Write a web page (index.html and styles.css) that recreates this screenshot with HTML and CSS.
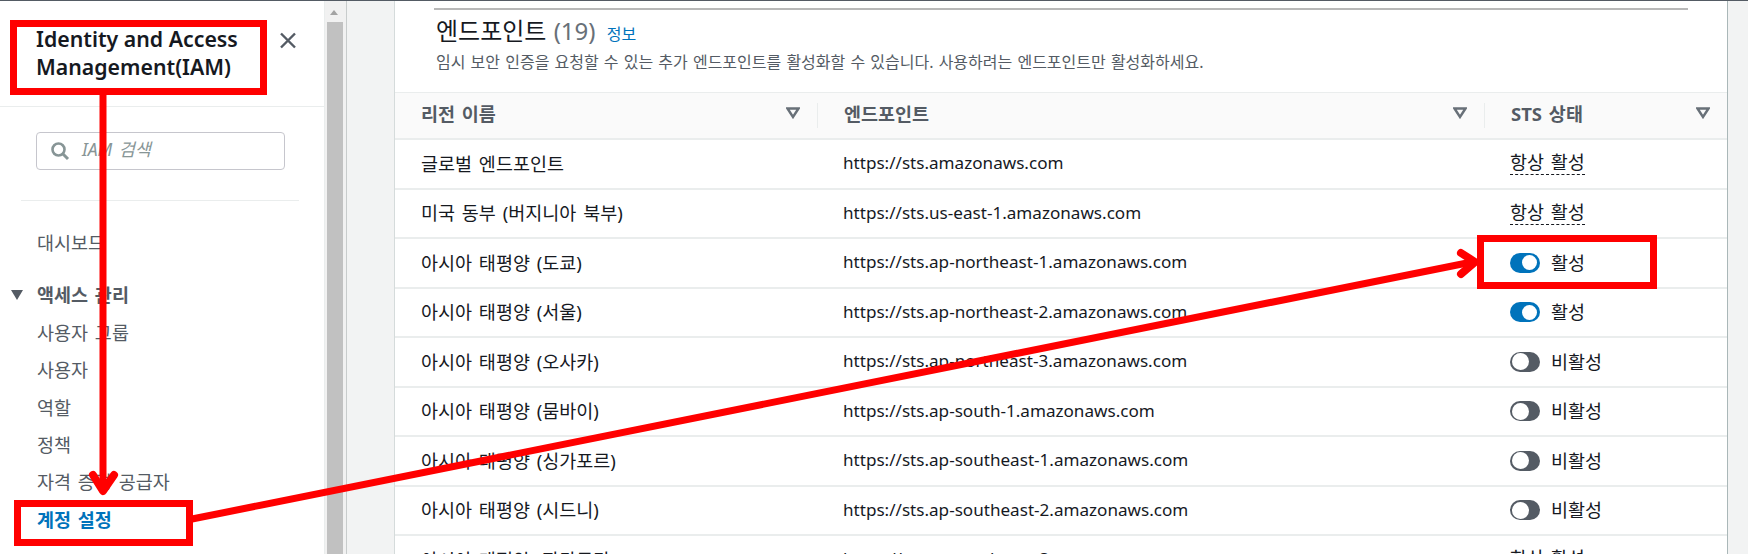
FILE: index.html
```html
<!DOCTYPE html>
<html lang="ko">
<head>
    <meta charset="UTF-8">
    <title>엔드포인트</title>
    <link rel="stylesheet" href="styles.css">
</head>
<body>
    <aside class="lateral">
        <div class="cabecalho">
            <h2>Identity and Access Management(IAM)</h2>
            <svg class="fechar" width="20" height="20" viewBox="0 0 20 20"><path d="M3 2.5 L17 16.5 M17 2.5 L3 16.5" stroke="#545b64" stroke-width="2.4" fill="none"/></svg>
        </div>
        <div class="busca">
            <div class="campo">
                <svg width="20" height="20" viewBox="0 0 20 20"><circle cx="8.500" cy="8.500" r="6" stroke="#879596" stroke-width="2.600" fill="none"/><path d="M13 13 L18 18" stroke="#879596" stroke-width="3" fill="none"/></svg>
                <span>IAM 검색</span>
            </div>
        </div>
        <nav class="menu">
            <a class="item painel" href="#">대시보드</a>
            <div class="grupo"><i class="seta"></i>액세스 관리</div>
            <a class="item" href="#">사용자 그룹</a>
            <a class="item" href="#">사용자</a>
            <a class="item" href="#">역할</a>
            <a class="item" href="#">정책</a>
            <a class="item" href="#">자격 증명 공급자</a>
            <a class="item ativo" href="#">계정 설정</a>
        </nav>
    </aside>
    <div class="rolagem"><div class="polegar"></div></div>
    <main class="conteudo">
        <section class="cartao">
            <div class="titulo">
                <h3>엔드포인트 <span class="conta">(19)</span> <a href="#">정보</a></h3>
                <p>임시 보안 인증을 요청할 수 있는 추가 엔드포인트를 활성화할 수 있습니다. 사용하려는 엔드포인트만 활성화하세요.</p>
            </div>
            <div class="tabela">
                <div class="linha topo">
                    <div class="col c1">리전 이름<svg class="ordem" width="14" height="12" viewBox="0 0 14 12"><path d="M1.500 1.500 H12.500 L7 10 Z" fill="none" stroke="#687078" stroke-width="2.400"/></svg></div>
                    <div class="col c2">엔드포인트<svg class="ordem" width="14" height="12" viewBox="0 0 14 12"><path d="M1.500 1.500 H12.500 L7 10 Z" fill="none" stroke="#687078" stroke-width="2.400"/></svg></div>
                    <div class="col c3">STS 상태<svg class="ordem" width="14" height="12" viewBox="0 0 14 12"><path d="M1.500 1.500 H12.500 L7 10 Z" fill="none" stroke="#687078" stroke-width="2.400"/></svg></div>
                </div>
                <div class="linha">
                    <div class="col c1">글로벌 엔드포인트</div>
                    <div class="col c2">https://sts.amazonaws.com</div>
                    <div class="col c3"><span class="sempre">항상 활성</span></div>
                </div>
                <div class="linha">
                    <div class="col c1">미국 동부 (버지니아 북부)</div>
                    <div class="col c2">https://sts.us-east-1.amazonaws.com</div>
                    <div class="col c3"><span class="sempre">항상 활성</span></div>
                </div>
                <div class="linha">
                    <div class="col c1">아시아 태평양 (도쿄)</div>
                    <div class="col c2">https://sts.ap-northeast-1.amazonaws.com</div>
                    <div class="col c3"><i class="chave ligada"></i>활성</div>
                </div>
                <div class="linha">
                    <div class="col c1">아시아 태평양 (서울)</div>
                    <div class="col c2">https://sts.ap-northeast-2.amazonaws.com</div>
                    <div class="col c3"><i class="chave ligada"></i>활성</div>
                </div>
                <div class="linha">
                    <div class="col c1">아시아 태평양 (오사카)</div>
                    <div class="col c2">https://sts.ap-northeast-3.amazonaws.com</div>
                    <div class="col c3"><i class="chave"></i>비활성</div>
                </div>
                <div class="linha">
                    <div class="col c1">아시아 태평양 (뭄바이)</div>
                    <div class="col c2">https://sts.ap-south-1.amazonaws.com</div>
                    <div class="col c3"><i class="chave"></i>비활성</div>
                </div>
                <div class="linha">
                    <div class="col c1">아시아 태평양 (싱가포르)</div>
                    <div class="col c2">https://sts.ap-southeast-1.amazonaws.com</div>
                    <div class="col c3"><i class="chave"></i>비활성</div>
                </div>
                <div class="linha">
                    <div class="col c1">아시아 태평양 (시드니)</div>
                    <div class="col c2">https://sts.ap-southeast-2.amazonaws.com</div>
                    <div class="col c3"><i class="chave"></i>비활성</div>
                </div>
                <div class="linha">
                    <div class="col c1">아시아 태평양 (자카르타)</div>
                    <div class="col c2">https://sts.ap-southeast-3.amazonaws.com</div>
                    <div class="col c3"><span class="sempre">항상 활성</span></div>
                </div>
            </div>
        </section>
    </main>

    <!-- marcacoes vermelhas por cima da tela -->
    <svg class="marcas" width="1748" height="554" viewBox="0 0 1748 554">
        <g fill="none" stroke="#ff0000" stroke-width="7">
            <rect x="13.500" y="23.500" width="250" height="68"/>
            <rect x="17.500" y="503.500" width="172" height="39"/>
            <rect x="1480.500" y="238.500" width="173" height="47"/>
            <path d="M103 95 V490"/>
            <path d="M93 475 L103 491 L114 475" stroke-linecap="round" stroke-linejoin="round" stroke-width="8"/>
            <path d="M192 519 L1472 262"/>
            <path d="M1461 253 L1475 262 L1461 274" stroke-linecap="round" stroke-linejoin="round" stroke-width="8"/>
        </g>
    </svg>
</body>
</html>
```

FILE: styles.css
```css
*{
    box-sizing: border-box;
    margin: 0;
    padding: 0;
}
html, body{
    height: 100%;
    overflow: hidden;
}
body{
    display: flex;
    border-top: 1px solid #545b64;
    background-color: #f2f3f3;
    font-family: "Noto Sans", "Noto Sans CJK KR", sans-serif;
    font-size: 18.500px;
    word-spacing: 2px;
    color: #16191f;
}
a{
    text-decoration: none;
}
.lateral{
    width: 325px;
    flex-shrink: 0;
    background-color: white;
    border-right: 1px solid #eaeded;
}
.cabecalho{
    height: 106px;
    border-bottom: 1px solid #eaeded;
    display: flex;
    align-items: flex-start;
    padding: 24px 0 0 36px;
}
.cabecalho h2{
    width: 240px;
    font-size: 21.300px;
    line-height: 28px;
    font-weight: 600;
    word-spacing: 0;
}
.fechar{
    margin: 6px 0 0 2px;
}
.busca{
    margin: 0 25px 0 21px;
    height: 94px;
    padding: 25px 0 0 15px;
    border-bottom: 1px solid #eaeded;
}
.campo{
    width: 249px;
    height: 38px;
    border: 1px solid #c6c6cd;
    border-radius: 4px;
    display: flex;
    align-items: center;
    padding-left: 13px;
    gap: 12px;
    color: #879596;
    font-style: italic;
    font-size: 17.500px;
}
.campo span{
    padding-bottom: 5px;
}
.menu{
    display: flex;
    flex-direction: column;
    padding: 23px 0 0 37px;
}
.item{
    height: 37.400px;
    line-height: 37.400px;
    color: #545b64;
}
.painel{
    margin-bottom: 15px;
}
.grupo{
    height: 37.400px;
    line-height: 37.400px;
    font-weight: 700;
    color: #545b64;
    position: relative;
}
.seta{
    position: absolute;
    left: -26px;
    top: 14px;
    border-left: 6px solid transparent;
    border-right: 6px solid transparent;
    border-top: 10px solid #545b64;
}
.ativo{
    color: #0073bb;
    font-weight: 700;
}
.rolagem{
    width: 21px;
    flex-shrink: 0;
    background-color: #f1f1f1;
    padding: 21px 3px 0 2px;
    position: relative;
}
.rolagem::before{
    content: "";
    position: absolute;
    left: 5px;
    top: 9px;
    border-left: 4px solid transparent;
    border-right: 4px solid transparent;
    border-bottom: 5px solid #a3a3a3;
}
.polegar{
    height: 100%;
    background-color: #c1c1c1;
}
.conteudo{
    flex: 1;
    border-left: 1px solid #c8cccc;
    padding: 0 20px 0 47px;
    overflow: hidden;
}
.cartao{
    background-color: white;
    border-left: 1px solid #d5dbdb;
    border-right: 1px solid #aab7b8;
    height: 100%;
}
.titulo{
    height: 91px;
    padding: 7px 39px 0 41px;
}
.titulo h3{
    border-top: 2px solid #b8b8b8;
    margin-left: -2px;
    padding: 4px 0 0 2px;
    font-size: 24px;
    line-height: 33px;
    font-weight: 400;
    word-spacing: 1px;
}
.conta{
    color: #687078;
}
.titulo a{
    font-size: 16px;
    color: #0073bb;
    margin-left: 4px;
}
.titulo p{
    font-size: 16px;
    line-height: 22px;
    word-spacing: 1px;
    color: #545b64;
}
.linha{
    display: flex;
    height: 49.500px;
    align-items: center;
    padding-bottom: 2px;
    border-bottom: 2px solid #eaeded;
}
.topo{
    height: 48px;
    padding-bottom: 0;
    background-color: #fafafa;
    border-top: 1px solid #eaeded;
    font-weight: 700;
    color: #545b64;
}
.col{
    display: flex;
    align-items: center;
    position: relative;
    padding-left: 26px;
}
.c1{
    width: 422px;
}
.c2{
    width: 667px;
    font-size: 17.100px;
    word-spacing: 0;
}
.topo .c2{
    font-size: 18.500px;
}
.c3{
    flex: 1;
}
.topo .col{
    height: 25px;
    justify-content: space-between;
    padding-right: 17px;
    padding-bottom: 6px;
}
.topo .c2, .topo .c3{
    border-left: 1px solid #eaeded;
}
.sempre{
    border-bottom: 1px dashed #16191f;
    line-height: 24px;
}
.chave{
    width: 30px;
    height: 20px;
    top: 1px;
    border-radius: 10px;
    background-color: #545b64;
    margin-right: 11px;
    position: relative;
}
.chave::after{
    content: "";
    position: absolute;
    left: 1.500px;
    top: 1.500px;
    width: 17px;
    height: 17px;
    border-radius: 50%;
    background-color: white;
}
.ligada{
    background-color: #0073bb;
}
.ligada::after{
    left: 12px;
    top: 2.500px;
    width: 15px;
    height: 15px;
}
.marcas{
    position: absolute;
    left: 0;
    top: 0;
    pointer-events: none;
}
```
